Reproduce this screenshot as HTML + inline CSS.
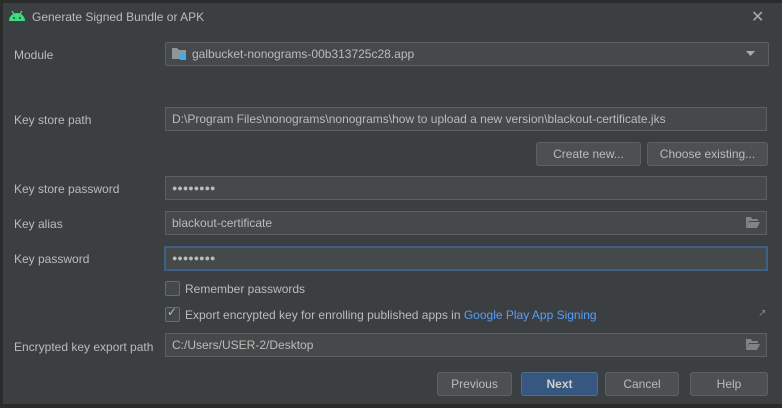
<!DOCTYPE html><html><head><style>
body{margin:0;width:782px;height:408px;background:#2b2b2b;font-family:"Liberation Sans",sans-serif;font-size:12px;color:#bbbbbb;overflow:hidden;position:relative}
.dlg{position:absolute;left:3px;top:3px;right:0;bottom:4px;background:#3c3f41}
.a{position:absolute}
.lbl{position:absolute;left:14px}
.f{position:absolute;left:165px;width:600px;height:22px;background:#45494a;border:1px solid #5e6060;line-height:22px;padding-left:6px;box-sizing:content-box;color:#bbbbbb}
.btn{position:absolute;height:22px;border:1px solid #5e6060;background:#4c5052;border-radius:3px;text-align:center;line-height:22px;color:#bbbbbb}
.cb{position:absolute;left:165px;width:13px;height:13px;border:1px solid #6b6b6b;background:#43494a;border-radius:2px}
.fold{position:absolute;right:6px;top:5px;width:14px;height:11px}
</style></head><body>
<div class="dlg"></div>
<svg class="a" style="left:8px;top:10px" width="18" height="12" viewBox="0 0 18 12"><path d="M1 11a8 8 0 0 1 16 0z" fill="#3ddc84"/><line x1="4" y1="1" x2="6" y2="4" stroke="#3ddc84" stroke-width="1.3"/><line x1="14" y1="1" x2="12" y2="4" stroke="#3ddc84" stroke-width="1.3"/><circle cx="6" cy="8" r="1" fill="#3c3f41"/><circle cx="12" cy="8" r="1" fill="#3c3f41"/></svg>
<div class="a" style="left:32px;top:10px">Generate Signed Bundle or APK</div>
<div class="a" style="left:751px;top:7px;font-size:16px;color:#aaa">✕</div>
<div class="lbl" style="top:48px">Module</div>
<div class="f" style="top:42px;width:576px;padding-left:26px;border-radius:2px">galbucket-nonograms-00b313725c28.app</div>
<svg class="a" style="left:172px;top:47px" width="16" height="14"><path d="M0 1h5l2 2h7v9H0z" fill="#8d9699"/><rect x="8" y="7" width="6" height="6" fill="#3daee9"/></svg>
<svg class="a" style="left:746px;top:51px" width="10" height="6"><path d="M0 0h9l-4.5 5z" fill="#aaa"/></svg>
<div class="lbl" style="top:113px">Key store path</div>
<div class="f" style="top:107px;width:594px">D:\Program Files\nonograms\nonograms\how to upload a new version\blackout-certificate.jks</div>
<div class="btn" style="left:536px;top:142px;width:103px">Create new...</div>
<div class="btn" style="left:647px;top:142px;width:119px">Choose existing...</div>
<div class="lbl" style="top:182px">Key store password</div>
<div class="f" style="top:176px;width:594px;font-size:9px">●●●●●●●●</div>
<div class="lbl" style="top:217px">Key alias</div>
<div class="f" style="top:211px;width:594px">blackout-certificate</div>
<svg class="fold" style="left:746px;top:217px" width="14" height="11"><path d="M0 0h5l1 2h6v2H3L0 11z M3 5h11l-3 6H0z" fill="#7f8486"/></svg>
<div class="lbl" style="top:252px">Key password</div>
<div class="f" style="top:246px;width:594px;border:2px solid #3d6185;left:164px;height:21px;line-height:21px;font-size:9px">●●●●●●●●</div>
<div class="cb" style="top:281px"></div>
<div class="a" style="left:185px;top:282px">Remember passwords</div>
<div class="cb" style="top:307px"></div>
<div class="a" style="left:167px;top:305px;font-size:12px;color:#bbb">✓</div>
<div class="a" style="left:185px;top:308px">Export encrypted key for enrolling published apps in <span style="color:#589df6">Google Play App Signing</span></div>
<div class="a" style="left:758px;top:308px;font-size:10px;color:#888">↗</div>
<div class="lbl" style="top:340px">Encrypted key export path</div>
<div class="f" style="top:333px;width:594px">C:/Users/USER-2/Desktop</div>
<svg class="fold" style="left:746px;top:339px" width="14" height="11"><path d="M0 0h5l1 2h6v2H3L0 11z M3 5h11l-3 6H0z" fill="#7f8486"/></svg>
<div class="btn" style="left:437px;top:372px;width:73px">Previous</div>
<div class="btn" style="left:521px;top:372px;width:75px;background:#365880;border-color:#4c708c;color:#d0d0d0;font-weight:bold">Next</div>
<div class="btn" style="left:605px;top:372px;width:72px">Cancel</div>
<div class="btn" style="left:690px;top:372px;width:76px">Help</div>
</body></html>
